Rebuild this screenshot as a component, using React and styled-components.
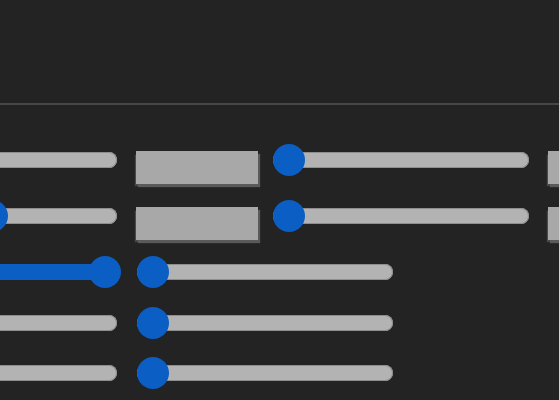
import React from "react";
import styled, { createGlobalStyle } from "styled-components";

const Global = createGlobalStyle`
  html, body {
    margin: 0;
    padding: 0;
    background: #232323;
    overflow: hidden;
    font-family: "Liberation Sans", Arial, sans-serif;
  }
`;

const Page = styled.div`
  width: 559px;
  height: 400px;
  background: #232323;
  overflow: hidden;
`;

const Header = styled.header`
  height: 103px;
  border-bottom: 2px solid #474747;
`;

const Panel = styled.div`
  display: flex;
  flex-direction: column;
  padding-top: 39px;
  margin-left: -139px;
`;

const Row = styled.div`
  display: flex;
  align-items: flex-start;
  gap: ${(p) => p.$gap}px;
  height: ${(p) => p.$h}px;
  flex: none;
`;

const SliderRoot = styled.div`
  position: relative;
  width: 256px;
  height: 32px;
  flex: none;
`;

const Track = styled.div`
  position: relative;
  margin-top: 8px;
  height: 16px;
  border-radius: 8px;
  background: #b3b3b3;
  box-shadow: inset 0 0 0 1px #8e8e8e;
  overflow: hidden;
`;

const Fill = styled.div`
  height: 100%;
  background: #0b5ec4;
`;

const Thumb = styled.div`
  position: absolute;
  top: 0;
  width: 32px;
  height: 32px;
  border-radius: 50%;
  background: #0b5ec4;
`;

const Box = styled.div`
  width: 122px;
  height: 33px;
  margin: 7px -1px 0 3px;
  background: #a8a8a8;
  box-shadow: 2px 3px 1px #5a5a5a, -2px 3px 1px -1px #4a4a4a;
  flex: none;
`;

const RANGE = 228;

function Slider({ value, filled }) {
  const x = value * RANGE;
  return (
    <SliderRoot>
      <Track>{filled && <Fill style={{ width: x + 16 }} />}</Track>
      <Thumb style={{ left: x }} />
    </SliderRoot>
  );
}

export default function App() {
  return (
    <>
      <Global />
      <Page>
        <Header />
        <Panel>
          <Row $h={56} $gap={16}>
            <Slider value={0} />
            <Box />
            <Slider value={0} />
            <Box />
          </Row>
          <Row $h={56} $gap={16}>
            <Slider value={0.505} />
            <Box />
            <Slider value={0} />
            <Box />
          </Row>
          <Row $h={51} $gap={20}>
            <Slider value={1} filled />
            <Slider value={0} />
          </Row>
          <Row $h={50} $gap={20}>
            <Slider value={0} />
            <Slider value={0} />
          </Row>
          <Row $h={50} $gap={20}>
            <Slider value={0} />
            <Slider value={0} />
          </Row>
        </Panel>
      </Page>
    </>
  );
}
